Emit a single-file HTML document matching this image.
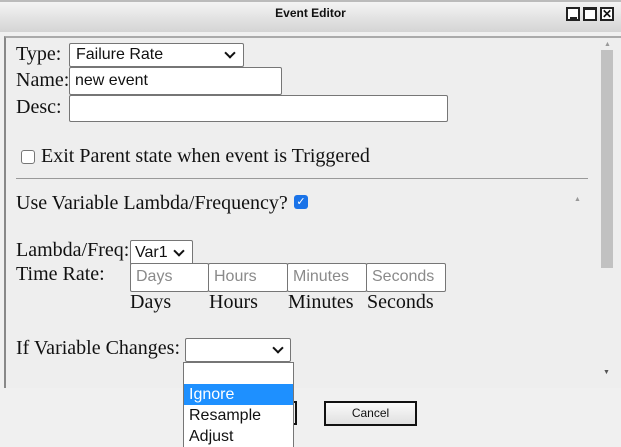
<!DOCTYPE html><html><head><style>
html,body{margin:0;width:621px;height:447px;overflow:hidden}
body{background:#f0f0f0;position:relative;font-family:"Liberation Serif",serif;font-size:20px;color:#111}
.a{position:absolute;white-space:nowrap}
.s{font-family:"Liberation Sans",sans-serif;font-size:15px}
.inp{position:absolute;background:#fff;border:1px solid #767676;box-sizing:border-box;border-radius:2px}
.ph{color:#8a8a8a;padding-left:5px;line-height:26px;font-size:16px}
.chev{position:absolute;width:6px;height:6px;border-right:2px solid #111;border-bottom:2px solid #111;transform:rotate(45deg)}
</style></head><body>
<div class="a" style="left:0;top:0;width:621px;height:32px;background:linear-gradient(#f4f4f4,#d4d4d4);border-top:2px solid #bbb;box-sizing:border-box"></div>
<div class="a s" style="left:0;width:621px;top:6px;text-align:center;font-size:12px;font-weight:bold">Event Editor</div>
<div class="a" style="left:566px;top:7px;width:14px;height:14px;border:2px solid #222;box-sizing:border-box;background:#fff"><div class="a" style="left:2px;top:8px;width:7px;height:2px;background:#222"></div></div>
<div class="a" style="left:583px;top:7px;width:14px;height:14px;border:2px solid #222;box-sizing:border-box;background:#fff;border-top-width:3px"></div>
<div class="a" style="left:600px;top:7px;width:14px;height:14px;border:2px solid #222;box-sizing:border-box;background:#fff;font:bold 12px 'Liberation Sans';line-height:10px;text-align:center">✕</div>
<div class="a" style="left:4px;top:36px;width:617px;height:350px;border-left:2px solid #888;border-top:2px solid #aaa;background:#eeeeee"></div>
<div class="a" style="left:601px;top:50px;width:12px;height:218px;background:#c1c1c1"></div>
<div class="a" style="left:604px;top:40px;font-size:7px;color:#999">▲</div>
<div class="a" style="left:603px;top:368px;font-size:7px;color:#555">▼</div>
<div class="a" style="left:574px;top:195px;font-size:7px;color:#999">▲</div>
<div class="a" style="left:16px;top:43px">Type:</div>
<div class="inp s" style="left:69px;top:43px;width:175px;height:24px;padding-left:6px;line-height:22px;font-size:16px">Failure Rate<div class="chev" style="left:156px;top:5px"></div></div>
<div class="a" style="left:16px;top:69px">Name:</div>
<div class="inp s" style="left:69px;top:67px;width:213px;height:28px;padding-left:5px;line-height:26px;font-size:16px">new event</div>
<div class="a" style="left:16px;top:96px">Desc:</div>
<div class="inp" style="left:69px;top:95px;width:379px;height:27px"></div>
<div class="inp" style="left:21px;top:150px;width:14px;height:14px;border-radius:3px"></div>
<div class="a" style="left:41px;top:145px">Exit Parent state when event is Triggered</div>
<div class="a" style="left:16px;top:178px;width:572px;height:1px;background:#999"></div>
<div class="a" style="left:16px;top:192px">Use Variable Lambda/Frequency?</div>
<div class="a" style="left:294px;top:195px;width:14px;height:14px;background:#1a73e8;border-radius:3px;color:#fff;font:bold 11px 'DejaVu Sans';text-align:center;line-height:14px">✓</div>
<div class="a" style="left:16px;top:239px">Lambda/Freq:</div>
<div class="inp s" style="left:130px;top:240px;width:63px;height:25px;padding-left:4px;line-height:23px;font-size:16px">Var1<div class="chev" style="left:44px;top:6px"></div></div>
<div class="a" style="left:16px;top:263px">Time Rate:</div>
<div class="inp s ph" style="left:130px;top:263px;width:79px;height:29px">Days</div>
<div class="inp s ph" style="left:208px;top:263px;width:80px;height:29px">Hours</div>
<div class="inp s ph" style="left:287px;top:263px;width:80px;height:29px">Minutes</div>
<div class="inp s ph" style="left:366px;top:263px;width:80px;height:29px">Seconds</div>
<div class="a" style="left:130px;top:291px">Days</div>
<div class="a" style="left:209px;top:291px">Hours</div>
<div class="a" style="left:288px;top:291px">Minutes</div>
<div class="a" style="left:367px;top:291px">Seconds</div>
<div class="a" style="left:16px;top:337px">If Variable Changes:</div>
<div class="inp" style="left:185px;top:338px;width:106px;height:24px"><div class="chev" style="left:88px;top:5px"></div></div>
<div class="a" style="left:240px;top:401px;width:57px;height:24px;border:2px solid #111;box-sizing:border-box;background:#eee"></div>
<div class="a s" style="left:324px;top:401px;width:93px;height:25px;border:2px solid #111;box-sizing:border-box;background:linear-gradient(#fafafa,#e0e0e0);font-size:12px;text-align:center;line-height:21px">Cancel</div>
<div class="a s" style="left:183px;top:362px;width:111px;height:85px;overflow:hidden;background:#fff;border:1px solid #767676;border-bottom:none;box-sizing:border-box;font-size:16px">
<div style="height:21px"></div>
<div style="height:21px;background:#1e90ff;color:#fff;padding-left:5px;line-height:21px">Ignore</div>
<div style="height:21px;padding-left:5px;line-height:21px">Resample</div>
<div style="height:21px;padding-left:5px;line-height:21px">Adjust</div>
</div>
</body></html>
